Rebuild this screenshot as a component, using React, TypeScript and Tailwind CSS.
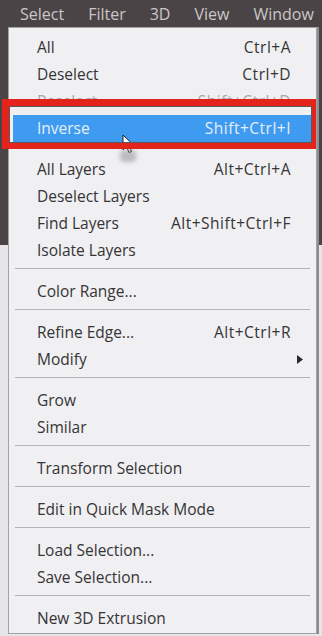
import React from 'react';

type Item =
  | { kind: 'item'; label: string; shortcut?: string; disabled?: boolean; active?: boolean; submenu?: boolean }
  | { kind: 'sep' };

const items: Item[] = [
  { kind: 'item', label: 'All', shortcut: 'Ctrl+A' },
  { kind: 'item', label: 'Deselect', shortcut: 'Ctrl+D' },
  { kind: 'item', label: 'Reselect', shortcut: 'Shift+Ctrl+D', disabled: true },
  { kind: 'item', label: 'Inverse', shortcut: 'Shift+Ctrl+I', active: true },
  { kind: 'sep' },
  { kind: 'item', label: 'All Layers', shortcut: 'Alt+Ctrl+A' },
  { kind: 'item', label: 'Deselect Layers' },
  { kind: 'item', label: 'Find Layers', shortcut: 'Alt+Shift+Ctrl+F' },
  { kind: 'item', label: 'Isolate Layers' },
  { kind: 'sep' },
  { kind: 'item', label: 'Color Range...' },
  { kind: 'sep' },
  { kind: 'item', label: 'Refine Edge...', shortcut: 'Alt+Ctrl+R' },
  { kind: 'item', label: 'Modify', submenu: true },
  { kind: 'sep' },
  { kind: 'item', label: 'Grow' },
  { kind: 'item', label: 'Similar' },
  { kind: 'sep' },
  { kind: 'item', label: 'Transform Selection' },
  { kind: 'sep' },
  { kind: 'item', label: 'Edit in Quick Mask Mode' },
  { kind: 'sep' },
  { kind: 'item', label: 'Load Selection...' },
  { kind: 'item', label: 'Save Selection...' },
  { kind: 'sep' },
  { kind: 'item', label: 'New 3D Extrusion' },
];

const menus = ['Select', 'Filter', '3D', 'View', 'Window'];

function MenuRow({ item }: { item: Extract<Item, { kind: 'item' }> }) {
  if (item.active) {
    return (
      <div className="h-[27px] ml-[4px] mr-[3px] bg-[#3f9bf0] flex items-center pl-[24px] pr-[22px] text-[#e4eefa]">
        <span className="flex-1">{item.label}</span>
        <span className="tracking-[0.5px]">{item.shortcut}</span>
      </div>
    );
  }
  return (
    <div
      className={`h-[27px] flex items-center pl-[28px] pr-[25px] ${
        item.disabled ? 'text-[#a9a8aa]' : 'text-[#353436]'
      }`}
    >
      <span className="flex-1">{item.label}</span>
      {item.shortcut && <span className="tracking-[0.5px]">{item.shortcut}</span>}
      {item.submenu && (
        <svg width="6" height="9" viewBox="0 0 6 9" className="mr-[-12px]">
          <path d="M0 0 L6 4.5 L0 9 Z" fill="#2a2a2a" />
        </svg>
      )}
    </div>
  );
}

export default function App() {
  return (
    <div
      className="relative w-[322px] h-[636px] overflow-hidden bg-[linear-gradient(to_bottom,#4a4446_245px,#e6e5e7_245px)] text-[15.5px] leading-none"
      style={{ fontFamily: '"Segoe UI", "Open Sans", "Noto Sans", sans-serif' }}
    >
      {/* Menu bar */}
      <div className="h-[27px] flex items-center gap-[24px] pl-[20px] text-[#cbc7c8] text-[16px]">
        {menus.map((m) => (
          <span key={m}>{m}</span>
        ))}
      </div>

      {/* Dropdown */}
      <div className="ml-[8px] w-[309px] h-[607px] border border-[#a3a2a4] bg-[#f0eff1] pt-[6px] shadow-[2px_0_0_#8d8c8e]">
        {items.map((it, i) =>
          it.kind === 'sep' ? (
            <div key={i} className="pt-[4px] pb-[9px] px-[6px]">
              <div className="h-px bg-[#b3b2b4]" />
            </div>
          ) : (
            <MenuRow key={i} item={it} />
          )
        )}
      </div>

      {/* Mouse cursor */}
      <svg
        width="13"
        height="20"
        viewBox="0 0 13 20"
        className="absolute left-[122px] top-[134px]"
      >
        <path
          d="M1 1 L1 16 L4.5 12.5 L7 18.5 L9.5 17.5 L7 11.5 L12 11.5 Z"
          fill="#ffffff"
          stroke="#222"
          strokeWidth="1"
          strokeLinejoin="round"
        />
      </svg>
      <div className="absolute left-[120px] top-[150px] w-[16px] h-[12px] bg-[#8a898b] opacity-50 blur-[2px] rounded-sm" />

      {/* Red highlight box */}
      <div className="absolute left-[2px] top-[99px] w-[314px] h-[50px] border-t-[7px] border-l-[7px] border-b-[6px] border-r-[4px] border-[#e5231d]">
        <div className="w-full h-full border border-[#5a595b]" />
      </div>
    </div>
  );
}
